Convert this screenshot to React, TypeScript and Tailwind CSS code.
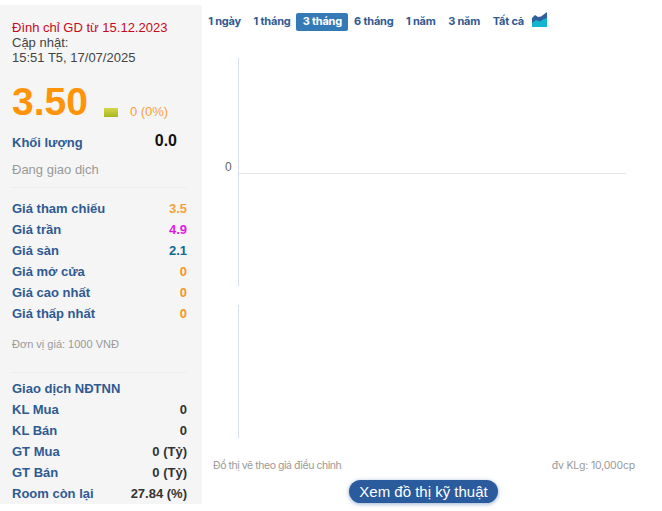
const ranges = ['1 ngày', '1 tháng', '3 tháng', '6 tháng', '1 năm', '3 năm', 'Tất cả'];

const prices = [
  { label: 'Giá tham chiếu', value: '3.5', color: 'text-[#f7a23b]' },
  { label: 'Giá trần', value: '4.9', color: 'text-[#e815e8]' },
  { label: 'Giá sàn', value: '2.1', color: 'text-[#126a96]' },
  { label: 'Giá mở cửa', value: '0', color: 'text-[#f7941d]' },
  { label: 'Giá cao nhất', value: '0', color: 'text-[#f7941d]' },
  { label: 'Giá thấp nhất', value: '0', color: 'text-[#f7941d]' },
];

const foreign = [
  { label: 'KL Mua', value: '0' },
  { label: 'KL Bán', value: '0' },
  { label: 'GT Mua', value: '0 (Tỷ)' },
  { label: 'GT Bán', value: '0 (Tỷ)' },
  { label: 'Room còn lại', value: '27.84 (%)' },
];

function Row({ label, value, color }: { label: string; value: string; color: string }) {
  return (
    <div className="flex h-[21px] items-center justify-between text-[13px] font-bold">
      <span className="text-[#2f5a92]">{label}</span>
      <span className={color}>{value}</span>
    </div>
  );
}

function Sidebar() {
  return (
    <aside className="mt-[5px] h-[499px] w-[202px] shrink-0 bg-[#f5f5f5] pl-3 pr-[15px] pt-[15px] font-['Liberation_Sans',sans-serif]">
      <div className="text-[13px] leading-[15px] text-[#444]">
        <div className="text-[#c8091a]">Đình chỉ GD từ 15.12.2023</div>
        <div>Cập nhật:</div>
        <div>15:51 T5, 17/07/2025</div>
      </div>

      <div className="mt-[11px] flex h-[50px] items-center">
        <span className="text-[39px] font-bold leading-none text-[#ff9408]">3.50</span>
        <span className="ml-[16px] mt-[22px] h-[9px] w-[14px] bg-gradient-to-b from-[#d3d84c] to-[#a9b51c]" />
        <span className="ml-[12px] mt-[22px] text-[13px] text-[#f7a23b]">0 (0%)</span>
      </div>

      <div className="mt-[4px] flex h-[24px] items-center justify-between pr-[10px] font-bold">
        <span className="mt-[2px] text-[13px] text-[#2f5a92]">Khối lượng</span>
        <span className="mb-[2px] text-[16px] text-[#111]">0.0</span>
      </div>

      <div className="mt-[5px] h-[21px] text-[13px] leading-[21px] text-[#999]">Đang giao dịch</div>

      <div className="mt-[7px] border-t border-[#ececec] pt-[10px]">
        {prices.map((row) => (
          <Row key={row.label} {...row} />
        ))}
      </div>

      <div className="mt-[12px] h-[16px] text-[11px] leading-[16px] text-[#999]">Đơn vị giá: 1000 VNĐ</div>

      <div className="mt-[20px] border-t border-[#ececec] pt-[5px]">
        <div className="flex h-[21px] items-center text-[13px] font-bold text-[#2f5a92]">Giao dịch NĐTNN</div>
        {foreign.map((row) => (
          <Row key={row.label} {...row} color="text-[#333]" />
        ))}
      </div>
    </aside>
  );
}

function RangeTabs() {
  return (
    <div className="flex h-[18px] items-center font-['Inter',sans-serif] text-[11px] font-bold tracking-[-0.2px] text-[#2f5a92]">
      {ranges.map((range) => (
        <button
          key={range}
          className={
            range === '3 tháng'
              ? 'mx-[-0.5px] h-[18px] w-[52px] rounded-[2px] bg-[#337ab7] pb-[2px] text-center text-white'
              : 'h-[18px] px-[6.25px] pb-[2px]'
          }
        >
          {range}
        </button>
      ))}
      <svg className="ml-[2px] mt-[-4px]" width="16" height="16" viewBox="0 0 16 16">
        <path d="M0 6 L3 3 L6 5 L9 4.5 L11 3 L15 0 V12 H0 Z" fill="#2f5f9e" />
        <path d="M0 11 L4 8 L8 9.5 L11 7.5 L15 6 V15 H0 Z" fill="#12b5cf" />
      </svg>
    </div>
  );
}

function Chart() {
  return (
    <svg className="mt-[27px] block" width="460" height="400" viewBox="0 0 460 400">
      <line x1="36.5" y1="0" x2="36.5" y2="228" stroke="#d6dfea" />
      <line x1="36.5" y1="247" x2="36.5" y2="380" stroke="#d6dfea" />
      <line x1="37" y1="115.5" x2="424" y2="115.5" stroke="#e6e6e6" />
      <text x="23" y="113" fontFamily="Liberation Sans, sans-serif" fontSize="12" fill="#666">0</text>
    </svg>
  );
}

export default function App() {
  return (
    <div className="flex h-[511px] w-[662px] overflow-hidden bg-white">
      <Sidebar />
      <main className="min-w-0 flex-1 pt-[13px]">
        <RangeTabs />
        <Chart />
        <div className="flex h-[16px] items-center justify-between pl-[11px] pr-[27px] font-['Inter',sans-serif] text-[10.5px] tracking-[-0.2px] text-[#999]">
          <span className="tracking-[-0.45px]">Đồ thị vẽ theo giá điều chỉnh</span>
          <span>đv KLg: 10,000cp</span>
        </div>
        <div className="mt-[6px] flex justify-center pr-[17px]">
          <button className="h-[23px] w-[149px] rounded-full bg-[#2a5b9c] font-['Liberation_Sans',sans-serif] text-[15px] leading-[23px] text-white shadow-[0_1px_4px_rgba(42,91,156,0.5)]">
            Xem đồ thị kỹ thuật
          </button>
        </div>
      </main>
    </div>
  );
}
